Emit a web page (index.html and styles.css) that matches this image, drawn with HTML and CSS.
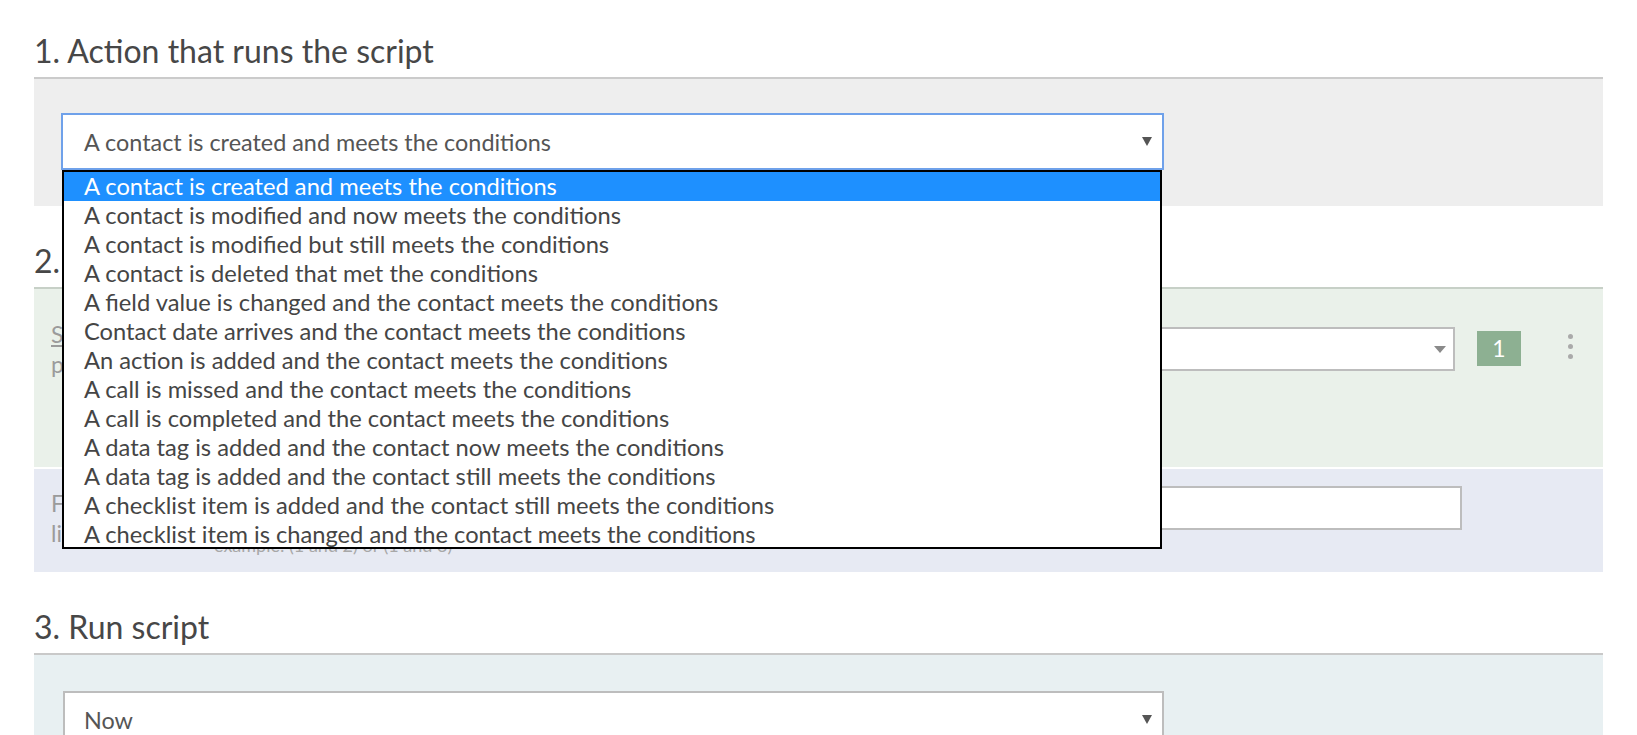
FILE: index.html
```html
<!DOCTYPE html>
<html lang="en">
<head>
<meta charset="utf-8">
<title>Script trigger</title>
<link rel="stylesheet" href="styles.css">
</head>
<body>
<div class="page">
  <section class="sec sec-first">
    <h2 class="title">1. Action that runs the script</h2>
    <div class="panel panel-gray">
      <div class="select-wrap">
        <div class="select select-main select-focus">
          <span class="select-text">A contact is created and meets the conditions</span>
          <span class="arrow"></span>
        </div>
        <ul class="dropdown">
          <li class="active">A contact is created and meets the conditions</li>
          <li>A contact is modified and now meets the conditions</li>
          <li>A contact is modified but still meets the conditions</li>
          <li>A contact is deleted that met the conditions</li>
          <li>A field value is changed and the contact meets the conditions</li>
          <li>Contact date arrives and the contact meets the conditions</li>
          <li>An action is added and the contact meets the conditions</li>
          <li>A call is missed and the contact meets the conditions</li>
          <li>A call is completed and the contact meets the conditions</li>
          <li>A data tag is added and the contact now meets the conditions</li>
          <li>A data tag is added and the contact still meets the conditions</li>
          <li>A checklist item is added and the contact still meets the conditions</li>
          <li>A checklist item is changed and the contact meets the conditions</li>
          <li>A checklist item is removed and the contact meets the conditions</li>
        </ul>
      </div>
    </div>
  </section>

  <section class="sec">
    <h2 class="title">2. Conditions for the contact</h2>
    <div class="panel panel-green">
      <div class="row">
        <div class="label"><span class="u">Saved filter</span> or<br>property conditions</div>
        <div class="select select-small">
          <span class="select-text"></span>
          <span class="arrow arrow-light"></span>
        </div>
        <div class="badge">1</div>
        <div class="kebab"><span></span><span></span><span></span></div>
      </div>
    </div>
    <div class="panel-blue">
      <div class="row">
        <div class="label label-b">Formula for<br>linking conditions</div>
        <div class="field-col">
          <div class="input"></div>
          <div class="hint">example: (1 and 2) or (1 and 3)</div>
        </div>
      </div>
    </div>
  </section>

  <section class="sec">
    <h2 class="title">3. Run script</h2>
    <div class="panel panel-teal">
      <div class="select select-main">
        <span class="select-text">Now</span>
        <span class="arrow"></span>
      </div>
    </div>
  </section>
</div>
</body>
</html>
```

FILE: styles.css
```css
html, body {
  margin: 0;
  padding: 0;
  height: 735px;
  overflow: hidden;
  background: #ffffff;
}

body {
  font-family: Lato, "Open Sans", "DejaVu Sans", sans-serif;
  color: #444444;
}

.page {
  padding: 0 34px;
}

.title {
  margin: 36px 0 0;
  padding: 0 0 8px;
  font-size: 32px;
  line-height: 37px;
  font-weight: 400;
  color: #474747;
  white-space: nowrap;
}

.sec-first .title {
  margin-top: 32px;
}

.panel {
  border-top: 2px solid #cbcbcb;
}

.panel-gray {
  background: #eeeeee;
  padding: 34px 27px 36px;
}

.select-wrap {
  position: relative;
  width: 1103px;
}

.select {
  display: flex;
  align-items: center;
  box-sizing: border-box;
  background: #ffffff;
  border: 2px solid #bdbdbd;
  color: #555555;
}

.select-main {
  width: 1101px;
  height: 57px;
  padding: 0 10px 0 19px;
  font-size: 23.4px;
}

.select-focus {
  width: 1103px;
  border-color: #6fa1ea;
  padding-left: 21px;
}

.select-text {
  flex: 1;
  white-space: nowrap;
}

.arrow {
  width: 0;
  height: 0;
  border-left: 5px solid transparent;
  border-right: 5px solid transparent;
  border-top: 9px solid #555555;
}

.arrow-light {
  border-left-width: 6px;
  border-right-width: 6px;
  border-top: 7px solid #8a8a8a;
}

.dropdown {
  position: absolute;
  left: 1px;
  top: 57px;
  z-index: 10;
  width: 1100px;
  height: 379px;
  box-sizing: border-box;
  margin: 0;
  padding: 0;
  list-style: none;
  background: #ffffff;
  border: 2px solid #000000;
  overflow: hidden;
}

.dropdown li {
  height: 29px;
  line-height: 29px;
  padding-left: 20px;
  font-size: 23.7px;
  color: #454545;
  white-space: nowrap;
}

.dropdown li.active {
  background: #1e90ff;
  color: #ffffff;
}

.row {
  display: flex;
  align-items: flex-start;
}

.panel-green {
  box-sizing: border-box;
  height: 180px;
  background: #eaf1ea;
  border-top-color: #c7d0c7;
  padding: 30px 0 0 17px;
}

.label {
  width: 163px;
  flex: none;
  font-size: 23px;
  line-height: 30px;
  color: #9b9b9b;
  white-space: nowrap;
  overflow: hidden;
}

.label .u {
  text-decoration: underline;
}

.select-small {
  width: 1241px;
  height: 44px;
  margin-top: 8px;
  padding: 0 7px 0 16px;
  font-size: 20px;
}

.badge {
  flex: none;
  width: 44px;
  height: 35px;
  margin: 12px 0 0 22px;
  background: #8db092;
  color: #ffffff;
  font-size: 23px;
  line-height: 35px;
  text-align: center;
}

.kebab {
  display: flex;
  flex-direction: column;
  gap: 5px;
  margin: 15px 0 0 47px;
}

.kebab span {
  width: 5px;
  height: 5px;
  border-radius: 50%;
  background: #aaaaaa;
}

.panel-blue {
  box-sizing: border-box;
  height: 103px;
  margin-top: 2px;
  background: #e7eaf3;
  padding: 17px 0 0 17px;
}

.label-b {
  margin-top: 2px;
}

.field-col {
  display: flex;
  flex-direction: column;
}

.input {
  width: 1248px;
  height: 44px;
  box-sizing: border-box;
  background: #ffffff;
  border: 2px solid #bdbdbd;
}

.hint {
  margin-top: 4px;
  font-size: 18px;
  line-height: 22px;
  color: #a8a8a8;
}

.panel-teal {
  background: #e8f0f2;
  border-top-color: #c9c9c9;
  padding: 36px 0 40px 29px;
}
```
